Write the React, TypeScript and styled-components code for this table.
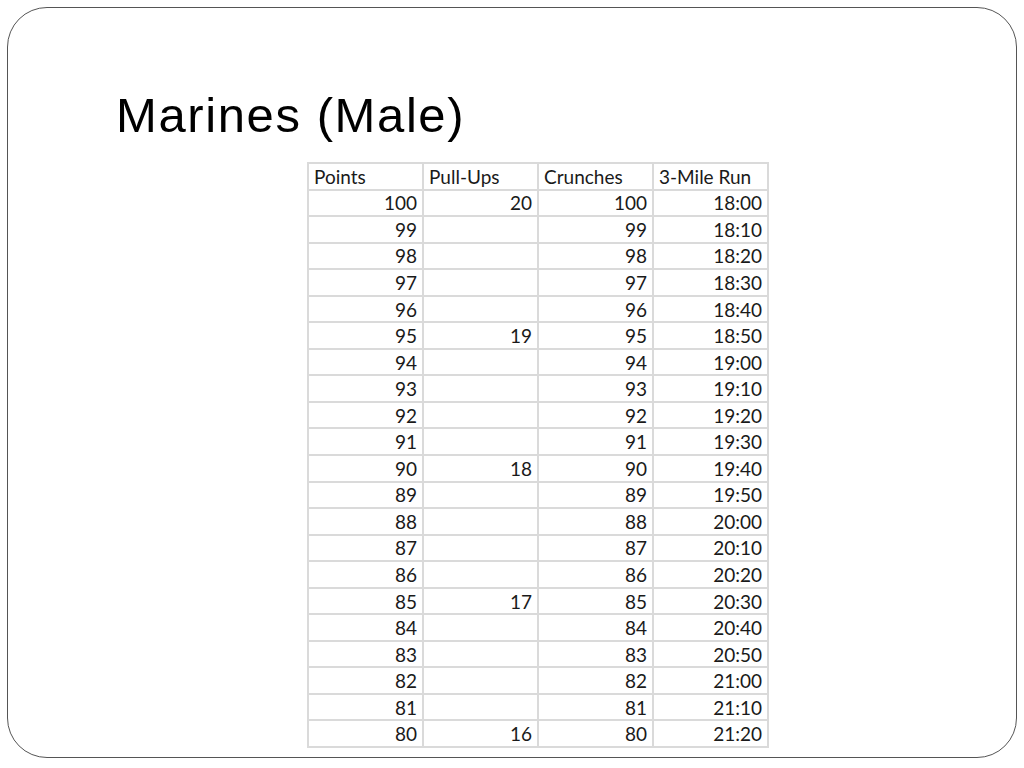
import React from 'react';
import styled, { createGlobalStyle } from 'styled-components';

type Row = {
  points: number;
  pullUps?: number;
  crunches: number;
  run: string;
};

const pullUpsAt: Record<number, number> = { 100: 20, 95: 19, 90: 18, 85: 17, 80: 16 };

const runTime = (idx: number) => {
  const secs = 18 * 60 + idx * 10;
  const m = Math.floor(secs / 60);
  const s = secs % 60;
  return `${m}:${s.toString().padStart(2, '0')}`;
};

const rows: Row[] = Array.from({ length: 21 }, (_, i) => {
  const points = 100 - i;
  return { points, pullUps: pullUpsAt[points], crunches: points, run: runTime(i) };
});

const GlobalStyle = createGlobalStyle`
  html, body {
    margin: 0;
    padding: 0;
    background: #ffffff;
  }
  body {
    font-family: "Liberation Sans", Arial, sans-serif;
  }
`;

const Page = styled.div`
  width: 1024px;
  height: 768px;
  padding: 7px 7px 10px 7px;
  box-sizing: border-box;
`;

const Slide = styled.div`
  width: 1010px;
  height: 751px;
  box-sizing: border-box;
  border: 1.5px solid #555555;
  border-radius: 40px;
  display: flex;
  flex-direction: column;
  padding-top: 83px;
  background: #ffffff;
`;

const Title = styled.h1`
  margin: 0 0 0 108px;
  font-family: "Liberation Sans", Arial, sans-serif;
  font-weight: 400;
  font-size: 49px;
  line-height: 1;
  letter-spacing: 1.6px;
  color: #000000;
`;

const Table = styled.table`
  margin: 22px 0 0 299px;
  border-collapse: collapse;
  font-family: Lato, "Open Sans", sans-serif;
  font-size: 19px;
  color: #1a1a1a;
  table-layout: fixed;
  width: 461px;
`;

const Cell = styled.td<{ $align?: 'left' | 'right' }>`
  width: 115px;
  height: 26.55px;
  padding: 0 5px 0 5px;
  box-sizing: border-box;
  border: 2px solid #dadada;
  text-align: ${(p) => p.$align ?? 'right'};
  vertical-align: middle;
  line-height: 1;
  white-space: nowrap;
`;

const headers = ['Points', 'Pull-Ups', 'Crunches', '3-Mile Run'];

export default function App() {
  return (
    <Page>
      <GlobalStyle />
      <Slide>
        <Title>Marines (Male)</Title>
        <Table>
          <tbody>
            <tr>
              {headers.map((h) => (
                <Cell key={h} $align="left">
                  {h}
                </Cell>
              ))}
            </tr>
            {rows.map((r) => (
              <tr key={r.points}>
                <Cell>{r.points}</Cell>
                <Cell>{r.pullUps ?? ''}</Cell>
                <Cell>{r.crunches}</Cell>
                <Cell>{r.run}</Cell>
              </tr>
            ))}
          </tbody>
        </Table>
      </Slide>
    </Page>
  );
}
